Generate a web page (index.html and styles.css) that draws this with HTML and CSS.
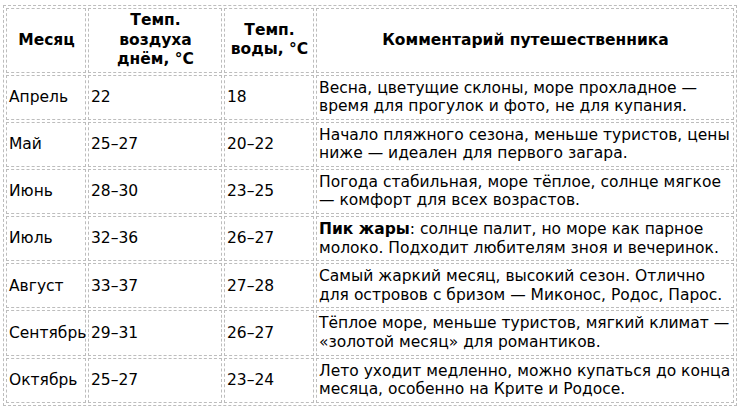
FILE: index.html
```html
<!DOCTYPE html>
<html lang="ru">
<head>
<meta charset="utf-8">
<link rel="stylesheet" href="styles.css">
</head>
<body>
<table class="climate">
  <thead>
    <tr>
      <th class="c-month">Месяц</th>
      <th class="c-air">Темп.<br>воздуха<br>днём, °C</th>
      <th class="c-water">Темп.<br>воды, °C</th>
      <th class="c-note">Комментарий путешественника</th>
    </tr>
  </thead>
  <tbody>
    <tr><td>Апрель</td><td>22</td><td>18</td><td>Весна, цветущие склоны, море прохладное — время для прогулок и фото, не для купания.</td></tr>
    <tr><td>Май</td><td>25–27</td><td>20–22</td><td>Начало пляжного сезона, меньше туристов, цены ниже — идеален для первого загара.</td></tr>
    <tr><td>Июнь</td><td>28–30</td><td>23–25</td><td>Погода стабильная, море тёплое, солнце мягкое — комфорт для всех возрастов.</td></tr>
    <tr><td>Июль</td><td>32–36</td><td>26–27</td><td><strong>Пик жары</strong>: солнце палит, но море как парное молоко. Подходит любителям зноя и вечеринок.</td></tr>
    <tr><td>Август</td><td>33–37</td><td>27–28</td><td>Самый жаркий месяц, высокий сезон. Отлично для островов с бризом — Миконос, Родос, Парос.</td></tr>
    <tr><td>Сентябрь</td><td>29–31</td><td>26–27</td><td>Тёплое море, меньше туристов, мягкий климат — «золотой месяц» для романтиков.</td></tr>
    <tr><td>Октябрь</td><td>25–27</td><td>23–24</td><td>Лето уходит медленно, можно купаться до конца месяца, особенно на Крите и Родосе.</td></tr>
  </tbody>
</table>
</body>
</html>
```
FILE: styles.css
```css
html, body {
  margin: 0;
  padding: 0;
  background: #ffffff;
}
body {
  padding: 5px 0 0 3px;
  font-family: "DejaVu Sans", Verdana, sans-serif;
  font-size: 15.5px;
  color: #000000;
}
.climate {
  border: 1px dashed #bdbdbd;
  border-collapse: separate;
  border-spacing: 2px;
  table-layout: fixed;
  width: 734px;
}
.climate th,
.climate td {
  border: 1px dashed #bdbdbd;
  padding: 3px 1px 3px 2px;
  text-align: left;
  vertical-align: middle;
  line-height: 18.6px;
}
.climate th {
  font-weight: bold;
  text-align: center;
  line-height: 19.5px;
  padding-top: 2px;
  padding-bottom: 2px;
}
.c-month { width: 75px; }
.c-air { width: 129px; }
.c-water { width: 85px; }
.c-note { width: 413px; }
```
